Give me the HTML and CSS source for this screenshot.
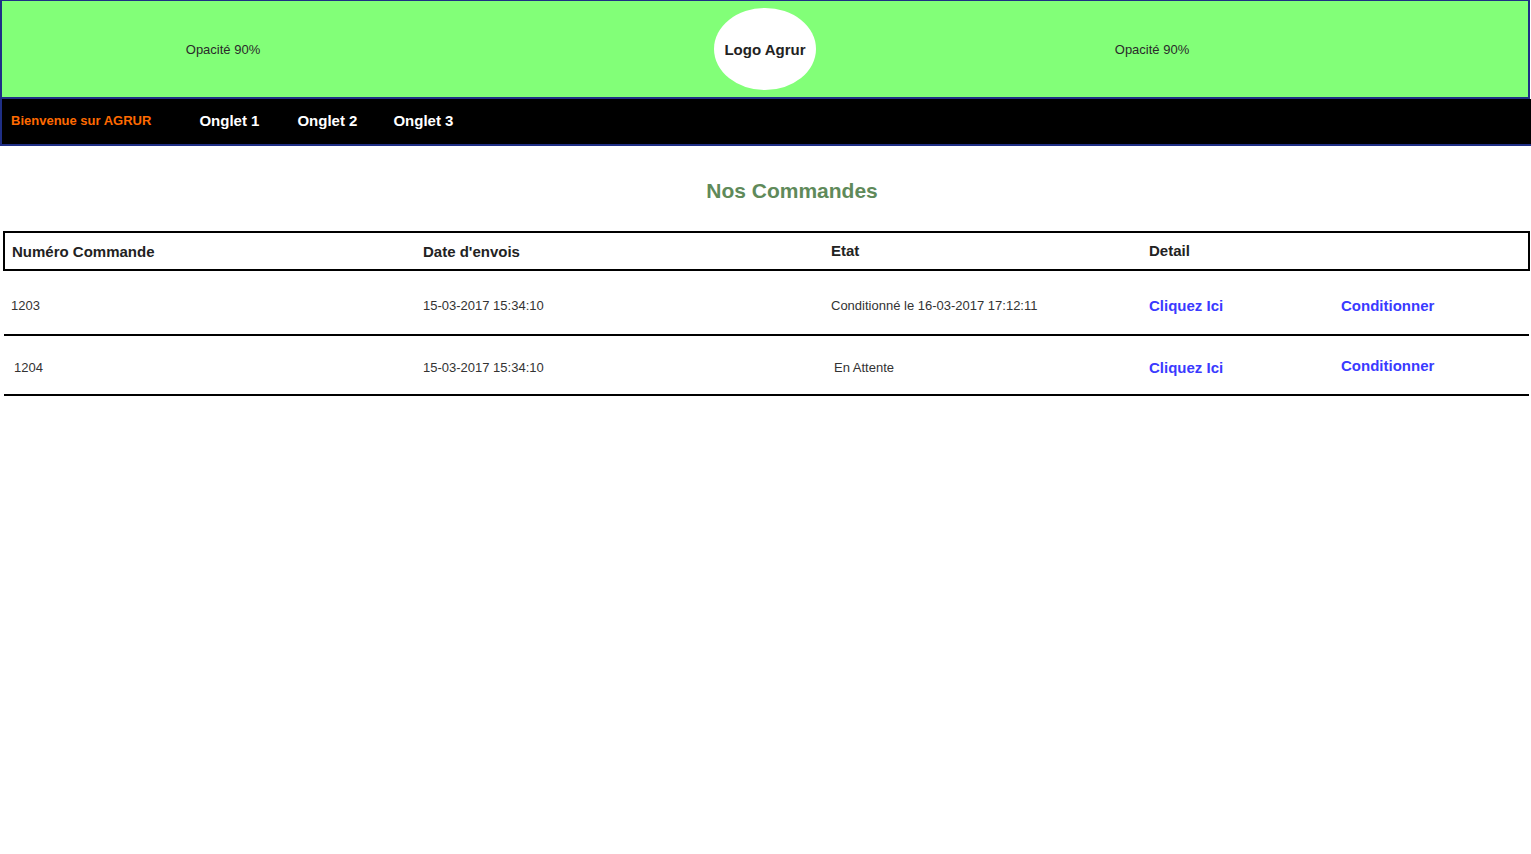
FILE: index.html
```html
<!DOCTYPE html>
<html lang="fr">
<head>
<meta charset="utf-8">
<title>AGRUR - Nos Commandes</title>
<link rel="stylesheet" href="styles.css">
</head>
<body>
<header class="banner">
  <div class="banner-cell">Opacité 90%</div>
  <div class="banner-cell"><div class="logo">Logo Agrur</div></div>
  <div class="banner-cell">Opacité 90%</div>
  <div></div>
</header>
<nav class="nav">
  <span class="welcome">Bienvenue sur AGRUR</span>
  <a class="tab" href="#">Onglet 1</a>
  <a class="tab" href="#">Onglet 2</a>
  <a class="tab" href="#">Onglet 3</a>
</nav>
<main class="content">
  <h2 class="title">Nos Commandes</h2>
  <table class="orders">
    <colgroup>
      <col class="c1"><col class="c2"><col class="c3"><col class="c4"><col class="c5">
    </colgroup>
    <thead>
      <tr>
        <th>Numéro Commande</th>
        <th>Date d'envois</th>
        <th>Etat</th>
        <th>Detail</th>
        <th></th>
      </tr>
    </thead>
    <tbody>
      <tr class="row1">
        <td>1203</td>
        <td>15-03-2017 15:34:10</td>
        <td>Conditionné le 16-03-2017 17:12:11</td>
        <td><a class="link" href="#">Cliquez Ici</a></td>
        <td><a class="link" href="#">Conditionner</a></td>
      </tr>
      <tr class="row2">
        <td class="shift">1204</td>
        <td>15-03-2017 15:34:10</td>
        <td class="shift">En Attente</td>
        <td><a class="link" href="#">Cliquez Ici</a></td>
        <td><a class="link up" href="#">Conditionner</a></td>
      </tr>
    </tbody>
  </table>
</main>
</body>
</html>
```
FILE: styles.css
```css
html, body {
  margin: 0;
  padding: 0;
  background: #ffffff;
  font-family: "Liberation Sans", Arial, sans-serif;
}

.banner {
  width: 1526px;
  height: 96px;
  background: #82ff78;
  border-top: 1px solid #1f2f86;
  border-left: 2px solid #1f2f86;
  border-right: 2px solid #1f2f86;
  border-bottom: 2px solid #1f2f86;
  display: grid;
  grid-template-columns: 442px 642px 132px 1fr;
  align-items: center;
}

.banner-cell {
  display: flex;
  justify-content: center;
  align-items: center;
  font-size: 13px;
  color: #2a2a2a;
}

.logo {
  width: 102px;
  height: 82px;
  border-radius: 50%;
  background: #ffffff;
  display: flex;
  align-items: center;
  justify-content: center;
  font-size: 15px;
  font-weight: bold;
  color: #222222;
}

.nav {
  background: #000000;
  border-left: 2px solid #1f2f86;
  border-bottom: 2px solid #1f2f86;
  display: flex;
  align-items: center;
  padding-left: 9px;
  padding-bottom: 2px;
  box-sizing: border-box;
  height: 47px;
}

.welcome {
  color: #ff6a00;
  font-size: 13px;
  font-weight: bold;
  margin-right: 48px;
}

.tab {
  color: #ffffff;
  font-size: 15px;
  font-weight: bold;
  text-decoration: none;
  margin-right: 37px;
}

.tab:nth-of-type(2) {
  margin-right: 36px;
}

.tab:first-of-type {
  margin-right: 38px;
}

.content {
  padding: 0 3px 0 3px;
}

.title {
  margin: 32px 0 28px 0;
  padding-left: 53px;
  text-align: center;
  font-size: 21px;
  font-weight: bold;
  color: #5f8a5a;
  line-height: 25px;
}

.orders {
  width: 1525px;
  border-collapse: collapse;
  table-layout: fixed;
}

.c1 { width: 411px; }
.c2 { width: 408px; }
.c3 { width: 318px; }
.c4 { width: 192px; }
.c5 { width: 196px; }

.orders thead tr {
  border: 2px solid #000000;
}

.orders th {
  height: 35px;
  padding: 0 0 0 8px;
  text-align: left;
  font-size: 15px;
  font-weight: bold;
  color: #222222;
}

.orders th:first-child {
  padding-left: 7px;
}

.orders th:nth-child(3),
.orders th:nth-child(4) {
  padding-bottom: 1px;
}

.orders td {
  font-size: 13px;
  color: #333333;
  padding-left: 8px;
}

.orders tbody tr {
  border-bottom: 2px solid #000000;
}

.row1 td { height: 56px; padding-top: 6px; }
.row2 td { height: 51px; padding-top: 6px; }

.orders td:first-child {
  padding-left: 7px;
}

.orders td.shift {
  padding-left: 10px;
}

.orders td:nth-child(3).shift {
  padding-left: 11px;
}

.link {
  color: #3a3aff;
  font-size: 15px;
  font-weight: bold;
  text-decoration: none;
}

.link.up {
  position: relative;
  top: -2px;
}
```
